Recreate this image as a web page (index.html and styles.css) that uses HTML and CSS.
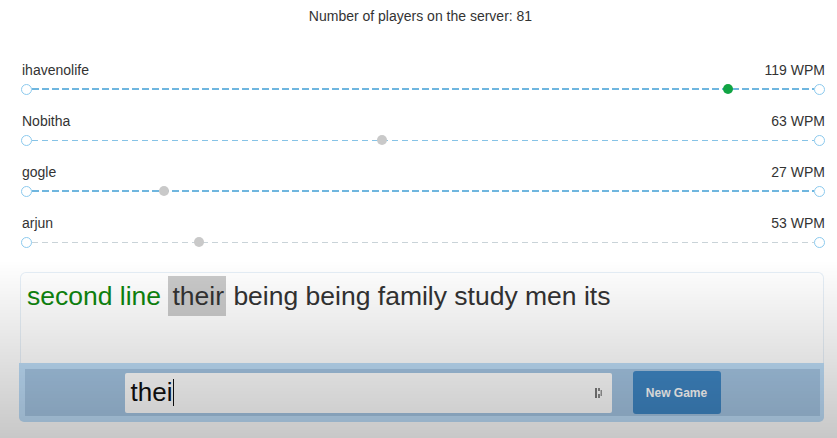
FILE: index.html
```html
<!DOCTYPE html>
<html>
<head>
<meta charset="utf-8">
<link rel="stylesheet" href="styles.css">
</head>
<body>
<div class="header">Number of players on the server: 81</div>

<div class="players">
  <div class="player">
    <div class="label"><span>ihavenolife</span><span>119 WPM</span></div>
    <div class="track">
      <span class="end"></span><span class="line line-thick"></span><span class="end"></span>
      <span class="dot dot-green" style="left: 87.2%"></span>
    </div>
  </div>
  <div class="player">
    <div class="label"><span>Nobitha</span><span>63 WPM</span></div>
    <div class="track">
      <span class="end"></span><span class="line line-thin"></span><span class="end"></span>
      <span class="dot" style="left: 44.2%"></span>
    </div>
  </div>
  <div class="player">
    <div class="label"><span>gogle</span><span>27 WPM</span></div>
    <div class="track">
      <span class="end"></span><span class="line line-thick"></span><span class="end"></span>
      <span class="dot" style="left: 17.1%"></span>
    </div>
  </div>
  <div class="player">
    <div class="label"><span>arjun</span><span>53 WPM</span></div>
    <div class="track">
      <span class="end"></span><span class="line line-grey"></span><span class="end"></span>
      <span class="dot" style="left: 21.4%"></span>
    </div>
  </div>
</div>

<div class="game">
  <div class="text-box"><span class="done">second line</span> <span class="current">their</span> being being family study men its</div>
  <div class="bar">
    <div class="bar-inner">
      <div class="input">
        <span class="typed">thei</span><span class="caret"></span>
        <svg class="pm-icon" width="8" height="10" viewBox="0 0 8 10">
          <rect x="0" y="0" width="2" height="10" fill="#7a7a7a"/>
          <rect x="3" y="0" width="2" height="3" fill="#8a8a8a"/>
          <rect x="3" y="6" width="2" height="4" fill="#8a8a8a"/>
          <rect x="5.5" y="2" width="1.5" height="6" fill="#9a9a9a"/>
        </svg>
      </div>
      <button class="btn">New Game</button>
    </div>
  </div>
</div>

<div class="shade"></div>
</body>
</html>
```

FILE: styles.css
```css
html, body {
  margin: 0;
  padding: 0;
  background: #fff;
}

body {
  font-family: "Liberation Sans", Arial, Helvetica, sans-serif;
  font-size: 14px;
  color: #333;
  width: 837px;
  height: 438px;
  overflow: hidden;
}

.header {
  text-align: center;
  line-height: 20px;
  padding-top: 6px;
  padding-left: 4px;
}

.players {
  margin: 34px 12px 0 21px;
  display: flex;
  flex-direction: column;
  gap: 13px;
}

.label {
  display: flex;
  justify-content: space-between;
  line-height: 20px;
  padding-left: 1px;
}

.track {
  position: relative;
  height: 18px;
  display: flex;
  align-items: center;
}

.end {
  width: 11px;
  height: 11px;
  box-sizing: border-box;
  border: 1.5px solid #8ccaee;
  border-radius: 50%;
  background: #fff;
  flex: none;
}

.line {
  flex: 1;
  height: 2px;
}

.line-thick {
  background: repeating-linear-gradient(90deg, #6fb6df 0 7px, transparent 7px 10px);
}

.line-thin {
  height: 1px;
  background: repeating-linear-gradient(90deg, #86c3e6 0 6px, transparent 6px 10px);
}

.line-grey {
  height: 1px;
  background: repeating-linear-gradient(90deg, #c9d3d8 0 6px, transparent 6px 10px);
}

.dot {
  position: absolute;
  top: 4px;
  width: 10px;
  height: 10px;
  margin-left: 1px;
  border-radius: 50%;
  background: #c9c9c9;
}

.dot-green {
  background: #11a444;
}

.game {
  margin: 21px 13px 0 19px;
}

.text-box {
  margin-left: 1px;
  border: 1px solid #e6eff7;
  border-bottom: none;
  border-radius: 6px 6px 0 0;
  padding: 8px 6px 0 6px;
  box-sizing: border-box;
  height: 91px;
  font-size: 26.5px;
  color: #333;
  background: #fff;
}

.done {
  color: #0f850f;
}

.current {
  background: #cacaca;
  padding: 5px 2px 5px 4px;
}

.bar {
  background: #bedef9;
  padding: 6px 4px 6px 6px;
  border-radius: 0 0 5px 5px;
}

.bar-inner {
  background: #a4c5e3;
  height: 47px;
  display: flex;
  justify-content: center;
  align-items: center;
  gap: 21px;
}

.input {
  width: 487px;
  height: 40px;
  box-sizing: border-box;
  background: #fff;
  border-radius: 2px;
  display: flex;
  align-items: center;
  padding-left: 6px;
  position: relative;
  font-size: 26px;
  color: #111;
}

.caret {
  width: 1px;
  height: 27px;
  background: #111;
  margin-left: 1px;
}

.pm-icon {
  position: absolute;
  right: 9px;
  top: 15px;
}

.btn {
  width: 88px;
  height: 43px;
  border: none;
  border-radius: 3px;
  background: #3f87c5;
  color: #fff;
  font-family: "Liberation Sans", Arial, Helvetica, sans-serif;
  font-weight: bold;
  font-size: 12px;
  padding: 0;
}

.shade {
  position: fixed;
  left: 0;
  right: 0;
  top: 260px;
  bottom: 0;
  background: linear-gradient(rgba(0, 0, 0, 0), rgba(0, 0, 0, 0.216));
  pointer-events: none;
}
```
